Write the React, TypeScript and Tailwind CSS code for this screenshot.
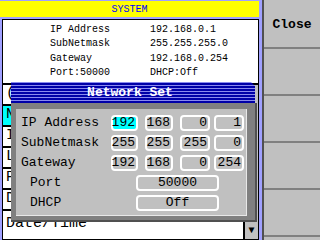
import React from 'react';

const info: [string, string][] = [
  ['IP Address', '192.168.0.1'],
  ['SubNetmask', '255.255.255.0'],
  ['Gateway', '192.168.0.254'],
  ['Port:50000', 'DHCP:Off'],
];

const menu = ['(Clock)', 'Network', 'Input', 'Language', 'Password', 'Display'];

const addrRows = [
  { label: 'IP Address', values: ['192', '168', '0', '1'] },
  { label: 'SubNetmask', values: ['255', '255', '255', '0'] },
  { label: 'Gateway', values: ['192', '168', '0', '254'] },
];

const boxW = ['w-[27px]', 'w-[28px]', 'w-[30px]', 'w-[30px]'];
const boxGap = ['', 'ml-[7px]', 'ml-[7px]', 'ml-[4px]'];

export default function App() {
  return (
    <div className="relative w-[320px] h-[240px] overflow-hidden bg-[#a0a0ff] flex font-['Liberation_Mono',monospace] text-black">
      {/* left panel */}
      <div className="w-[260px] flex flex-col pt-[1px]">
        <div className="h-[16px] w-[259px] bg-[#ffff00] flex items-center justify-center text-[10px] text-[#0000ff]">
          SYSTEM
        </div>
        <div className="mt-[2px] ml-[2px] w-[257px] h-[65px] bg-white border border-black pt-[2px] pl-[47px] text-[10px]">
          {info.map(([a, b]) => (
            <div key={a} className="h-[14.5px] flex items-center">
              <span className="w-[100px]">{a}</span>
              <span>{b}</span>
            </div>
          ))}
        </div>
        <div className="ml-[2px] w-[257px] flex-1 flex">
          <div className="flex-1 flex flex-col">
            {menu.map((m, i) => (
              <div
                key={m}
                className={`h-[21px] border border-black pl-[3px] flex items-center text-[15px] overflow-hidden ${
                  i === 1 ? 'bg-[#00ffff]' : 'bg-white'
                }`}
              >
                <span className="w-[10px] overflow-hidden whitespace-nowrap">{m}</span>
              </div>
            ))}
            <div className="flex-1 border border-black bg-white pl-[3px] pt-[4px] overflow-hidden">
              <div className="h-[17px] overflow-hidden text-[15px] leading-[17px]">Date/Time</div>
            </div>
          </div>
          <div className="w-[15px] flex flex-col justify-end bg-[#c0c0c0] border border-black">
            <div className="h-[16px] flex items-center justify-center text-[10px] leading-none">▼</div>
          </div>
        </div>
      </div>

      {/* right buttons */}
      <div className="ml-[2px] flex-1 flex flex-col bg-[#c0c0c0] border-l-2 border-[#505050] pt-[2px]">
        {['Close', '', '', '', ''].map((t, i) => (
          <div
            key={i}
            className="h-[47px] border-b-2 border-[#808080] flex items-center justify-center text-[13px] font-bold"
          >
            {t}
          </div>
        ))}
      </div>

      {/* Network Set dialog */}
      <div className="absolute left-[11px] top-[82px] w-[246px] h-[140px] flex flex-col">
        <div className="h-[22px] w-[244px] bg-[repeating-linear-gradient(to_bottom,#8a8aee_0px,#8a8aee_1px,#0000a8_1px,#0000a8_3px)] [clip-path:polygon(0_0,calc(100%-4px)_0,100%_4px,100%_100%,0_100%)] flex items-center justify-center pr-[6px] text-[13px] font-bold text-white">
          Network Set
        </div>
        <div className="flex-1 bg-[#808080] border-r-2 border-b-2 border-[#505050] pl-[5px] pr-[8px] pt-[6px] pb-[4px]">
          <div className="h-full bg-[#c0c0c0] border-r border-b border-[#e8e8e8] pt-[6px] pl-[5px] text-[13px]">
            {addrRows.map((r, ri) => (
              <div key={r.label} className="h-[16px] mb-[4px] flex items-center">
                <span className="w-[90px]">{r.label}</span>
                {r.values.map((v, i) => (
                  <div
                    key={i}
                    className={`${boxW[i]} ${boxGap[i]} h-[16px] border-2 border-white rounded-[4px] flex items-center justify-end pr-[1px] leading-[12px] ${
                      ri === 0 && i === 0 ? 'bg-[#00ffff]' : 'bg-[#c0c0c0]'
                    }`}
                  >
                    {v}
                  </div>
                ))}
              </div>
            ))}
            {[
              ['Port', '50000'],
              ['DHCP', 'Off'],
            ].map(([l, v]) => (
              <div key={l} className="h-[16px] mb-[4px] flex items-center">
                <span className="w-[90px] pl-[9px]">{l}</span>
                <div className="ml-[25px] w-[83px] h-[16px] border-2 border-white rounded-[4px] flex items-center justify-center leading-[12px]">
                  {v}
                </div>
              </div>
            ))}
          </div>
        </div>
      </div>
    </div>
  );
}
